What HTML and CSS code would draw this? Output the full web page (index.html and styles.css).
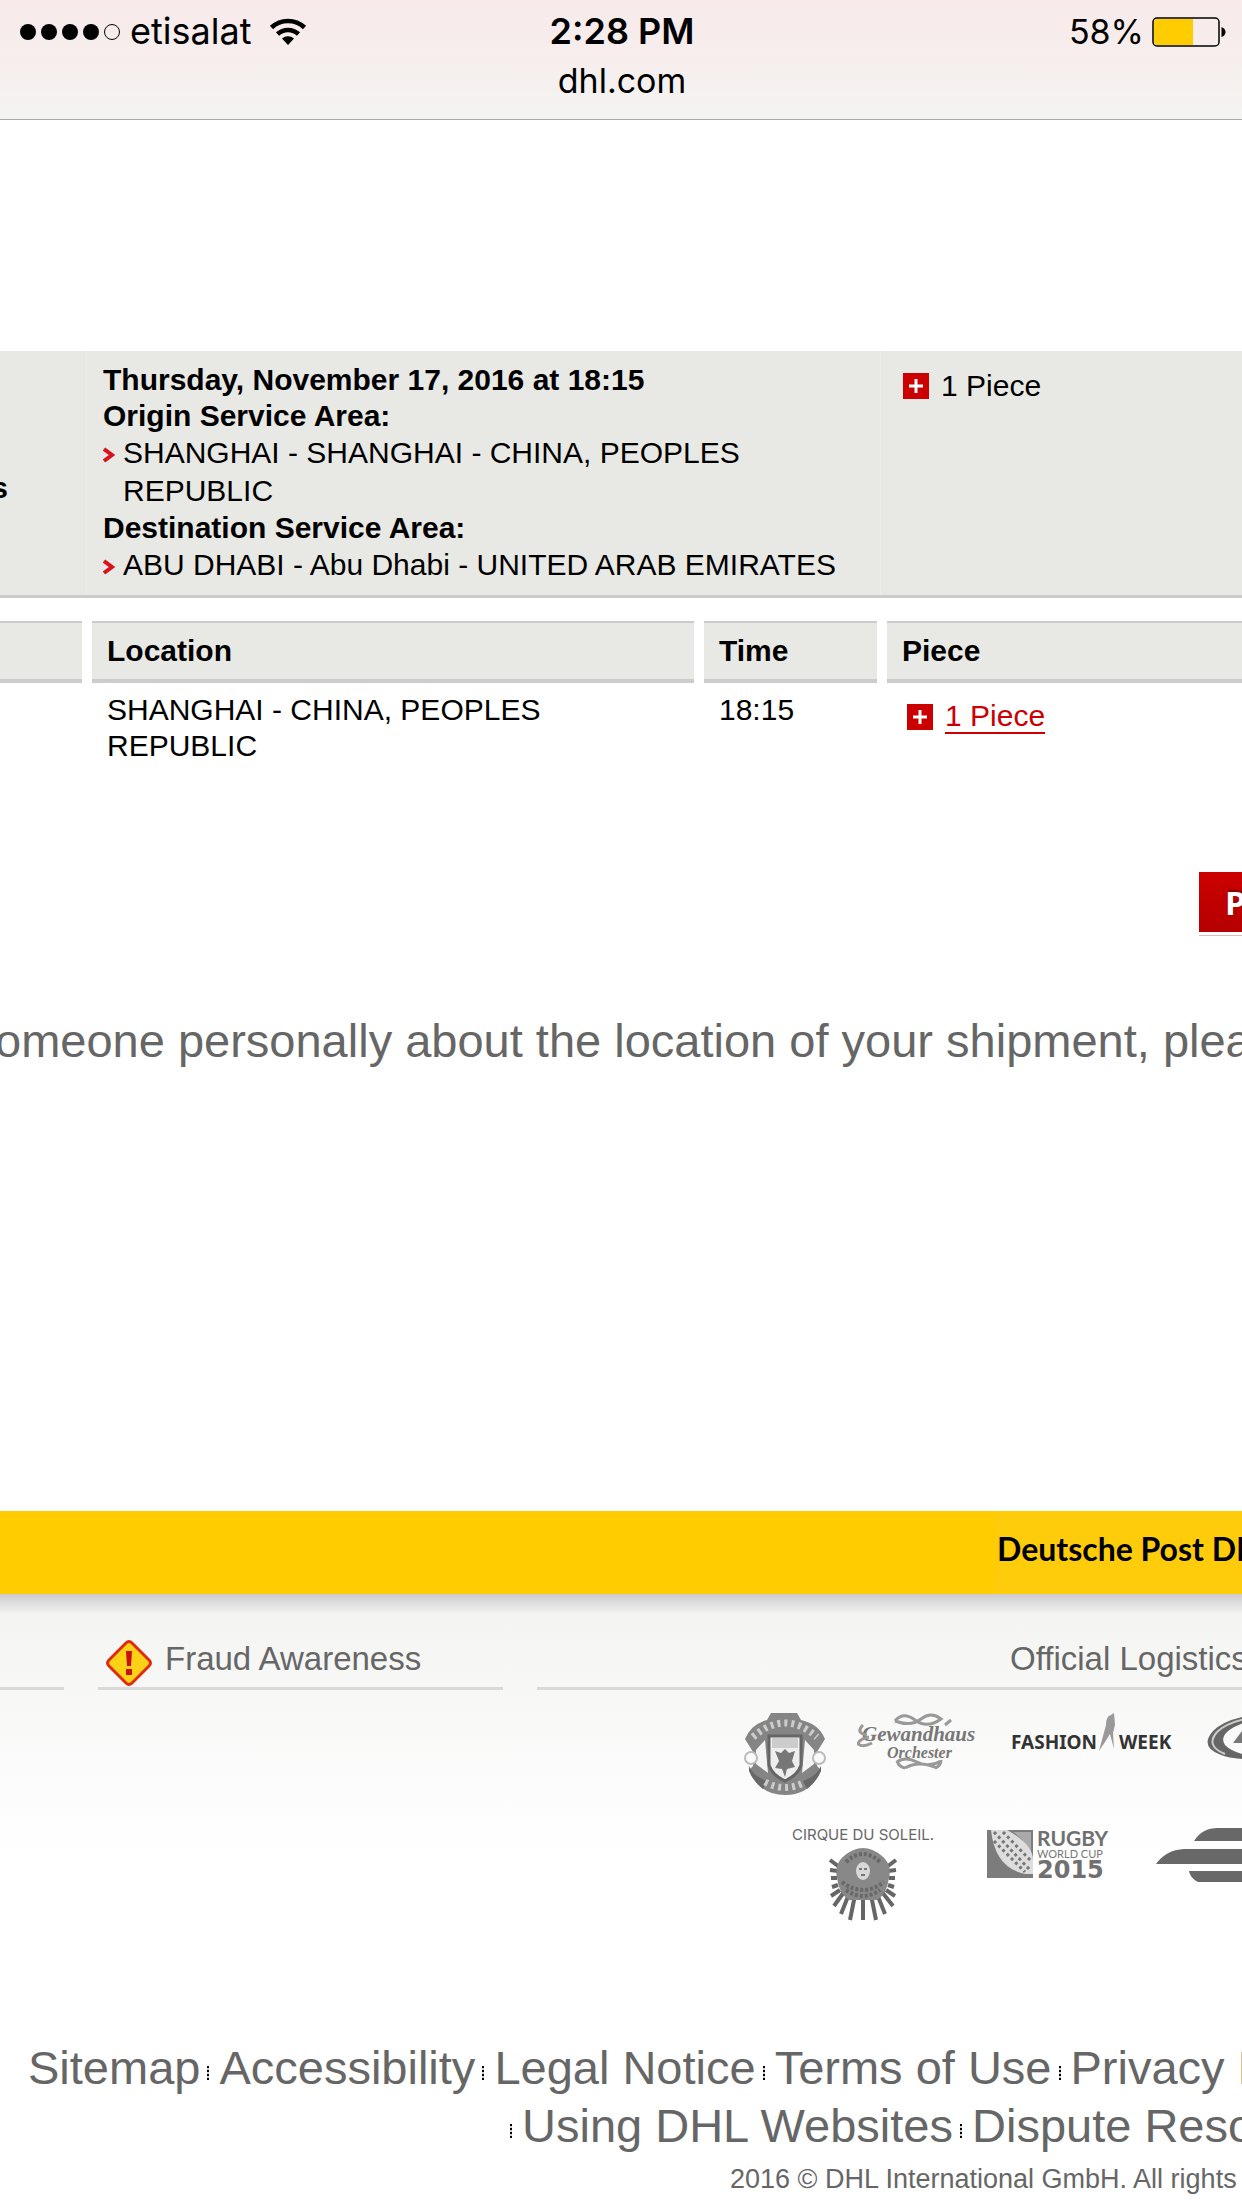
FILE: index.html
```
<!DOCTYPE html>
<html lang="en">
<head>
    <meta charset="UTF-8">
    <meta name="viewport" content="width=device-width, initial-scale=1.0">
    <title>DHL | Tracking</title>
    <link rel="stylesheet" href="styles.css">
</head>
<body>
    <header class="phone-bar">
        <div class="status">
            <div class="status-left">
                <svg class="signal" viewBox="0 0 102 18" width="102" height="18">
                    <circle cx="10" cy="9" r="8"/>
                    <circle cx="31" cy="9" r="8"/>
                    <circle cx="52" cy="9" r="8"/>
                    <circle cx="73" cy="9" r="8"/>
                    <circle cx="94" cy="9" r="7.5" fill="none" stroke="#000"/>
                </svg>
                <span>etisalat</span>
                <svg class="wifi" viewBox="0 0 38 28" width="38" height="28">
                    <path d="M2.5 9.5a24 24 0 0 1 33 0M8.5 16a15.500 15.500 0 0 1 21 0" fill="none" stroke="#000" stroke-width="4.500"/>
                    <path d="M19 27l-6-6.500a9 9 0 0 1 12 0z"/>
                </svg>
            </div>
            <div class="status-time">2:28 PM</div>
            <div class="status-right">
                <span>58%</span>
                <svg viewBox="0 0 74 30" width="74" height="30">
                    <rect x="1" y="1" width="66" height="28" rx="4" fill="none" stroke="#000" stroke-width="1.500"/>
                    <path d="M2 5a3 3 0 0 1 3-3h36v26H5a3 3 0 0 1-3-3z" fill="#fc0"/>
                    <path d="M69.500 10q4 1.500 4 5t-4 5z"/>
                </svg>
            </div>
        </div>
        <div class="site">dhl.com</div>
    </header>

    <main>
        <section class="summary">
            <div class="summary-status"><strong>s</strong></div>
            <div class="summary-route">
                <strong>Thursday, November 17, 2016 at 18:15</strong>
                <strong>Origin Service Area:</strong>
                <ul>
                    <li>
                        <svg viewBox="0 0 12 16" width="12" height="16"><path d="M1 2l8 6-8 6" fill="none" stroke="#d8141b" stroke-width="4"/></svg>
                        SHANGHAI - SHANGHAI - CHINA, PEOPLES REPUBLIC
                    </li>
                </ul>
                <strong>Destination Service Area:</strong>
                <ul>
                    <li>
                        <svg viewBox="0 0 12 16" width="12" height="16"><path d="M1 2l8 6-8 6" fill="none" stroke="#d8141b" stroke-width="4"/></svg>
                        ABU DHABI - Abu Dhabi - UNITED ARAB EMIRATES
                    </li>
                </ul>
            </div>
            <div class="summary-piece">
                <span class="piece">
                    <svg viewBox="0 0 26 26" width="26" height="26"><path fill="#c00" d="M0 0h26v26H0z"/><path d="M6 13h14M13 6v14" stroke="#fff" stroke-width="3"/></svg>
                    <span>1 Piece</span>
                </span>
            </div>
        </section>

        <table class="events">
            <colgroup>
                <col class="col-date">
                <col class="col-location">
                <col class="col-time">
                <col>
            </colgroup>
            <thead>
                <tr>
                    <th></th>
                    <th>Location</th>
                    <th>Time</th>
                    <th>Piece</th>
                </tr>
            </thead>
            <tbody>
                <tr>
                    <td></td>
                    <td>SHANGHAI - CHINA, PEOPLES REPUBLIC</td>
                    <td>18:15</td>
                    <td>
                        <a class="piece" href="#">
                            <svg viewBox="0 0 26 26" width="26" height="26"><path fill="#c00" d="M0 0h26v26H0z"/><path d="M6 13h14M13 6v14" stroke="#fff" stroke-width="3"/></svg>
                            <span>1 Piece</span>
                        </a>
                    </td>
                </tr>
            </tbody>
        </table>

        <div class="actions">
            <button class="btn" type="button">Print</button>
        </div>

        <p class="help">omeone personally about the location of your shipment, please</p>
    </main>

    <div class="brand-bar">
        <div class="brand">Deutsche Post DHL</div>
    </div>

    <footer>
        <div class="footer-columns">
            <div class="column"></div>
            <div class="column">
                <a class="fraud" href="#">
                    <svg viewBox="0 0 46 46" width="46" height="46">
                        <path d="M20 3q3-3 6 0l17 17q3 3 0 6L26 43q-3 3-6 0L3 26q-3-3 0-6z" fill="#fcd116" stroke="#dd2c10" stroke-width="3"/>
                        <path d="M20 11h6l-1 15h-4zM20 29h6v6h-6z" fill="#c81010"/>
                    </svg>
                    Fraud Awareness
                </a>
            </div>
            <div class="column column-partners">Official Logistics</div>
        </div>

        <div class="partners">
            <div class="partner-row">
                <svg viewBox="0 0 84 82" width="84" height="82">
                    <path d="M28 0h26l4 7q18 4 24 19l-8 13v14l4 4Q68 82 42 82T6 57l4-4V39L2 26Q8 11 24 7z" fill="#858585"/>
                    <path d="M22 27l-9 10v14l12 9zM62 27l9 10v14l-12 9z" fill="#f4f4f4"/>
                    <path d="M26 23h32v29q-3 10-16 16-13-6-16-16z" fill="#eee" stroke="#666" stroke-width="3"/>
                    <path d="M29 25h26v10H29z" fill="#ccc"/>
                    <path d="M32 38l6 2 4-4 4 4 6-2-3 10 3 6-8 2-2 8-3-8-7-1 4-7z" fill="#777"/>
                    <path d="M6 53q4 10 18 15l-4 8Q10 68 6 58zM78 53q-4 10-18 15l4 8q10-8 14-18z" fill="#686868"/>
                    <g fill="#fafafa" stroke="#bbb" stroke-width="2"><circle cx="8" cy="45" r="6"/><circle cx="76" cy="45" r="6"/></g>
                    <path d="M10 24q32-28 64 0M22 69q20 11 40 0" fill="none" stroke="#ccc" stroke-width="7" stroke-dasharray="3 4"/>
                </svg>
                <svg class="gewandhaus" viewBox="0 0 124 57" width="124" height="57">
                    <text class="logo-gewandhaus" x="5" y="28">Gewandhaus</text>
                    <text class="logo-orchester" x="30" y="45">Orchester</text>
                    <path d="M38 8Q46-2 58 7T84 6q-10-8-20 0T38 8M40 49q8-6 20 0t24-1M48 55q14-8 32 0M40 48q2 6 8 7M84 47q0 6-6 8M88 12l6-5M6 12Q-2 20 10 22M12 24Q2 26 1 31q4 4 14-1" fill="none" stroke="#999" stroke-width="3"/>
                </svg>
                <svg viewBox="0 0 164 40" width="164" height="40">
                    <text class="logo-fashion" x="0" y="36">FASHION</text>
                    <text class="logo-fashion" x="108" y="36">WEEK</text>
                    <path d="M95 12q0-9 5-10l3-2 1 12-2 8 1 16-4-15-5 8-6 9z" fill="#999"/>
                </svg>
                <svg viewBox="0 0 90 48" width="90" height="48">
                    <path d="M70 0Q24 2 8 18q-14 16 8 24 14 6 60 4V44Q34 46 20 32 12 20 38 10 52 4 90 4V0z" fill="#666"/>
                    <path d="M70 3Q28 4 12 19q-12 14 8 22" fill="none" stroke="#ccc" stroke-width="2"/>
                    <path d="M28 30l12-16h6l-6 16z" fill="#777"/>
                </svg>
            </div>
            <div class="partner-row partner-row-second">
                <svg viewBox="0 0 150 94" width="150" height="94">
                    <text class="logo-cirque" x="0" y="12">CIRQUE DU SOLEIL.</text>
                    <path d="M46 38l-8-6M46 43l-8-1M45 50l-6 0M46 57l-6 2M48 62l-9 6M52 64L42 78M57 66L49 86M63 67l-5 25M71 67v25M79 67l5 25M85 66l8 20M90 64l11 14M94 62l9 6M96 57l6 2M97 50l6 0M96 43l8-1M96 38l8-6" stroke="#666" stroke-width="4"/>
                    <path d="M52 28q19-16 38 0 10 8 7 22-2 16-12 22H57q-10-6-12-22-3-14 7-22z" fill="#888"/>
                    <path d="M54 34q17-16 34 0M50 54q21 16 42 0M54 62q17 12 34 0" fill="none" stroke="#686868" stroke-width="4" stroke-dasharray="3 2"/>
                    <ellipse cx="71" cy="43" rx="7" ry="9" fill="#d8d8d8"/>
                    <path d="M67 41h3M72 41h3M69 47h4" stroke="#777" stroke-width="2"/>
                </svg>
                <svg class="rugby" viewBox="0 0 124 50" width="124" height="50">
                    <path d="M0 2h46v48H0z" fill="#7c7c7c"/>
                    <path d="M26 4h18v22Q38 12 26 4z" fill="#aaa"/>
                    <path d="M4 2h16q26 14 26 30v14h-8Q8 40 4 2z" fill="#ddd"/>
                    <path d="M7 4l36 38M16 4l28 29M7 13l31 31" stroke="#777" stroke-width="3" stroke-dasharray="3 3"/>
                    <text class="logo-rugby" x="50" y="18">RUGBY</text>
                    <text class="logo-cup" x="50" y="30">WORLD CUP</text>
                    <text class="logo-year" x="50" y="50">2015</text>
                </svg>
                <svg class="stripes" viewBox="0 0 120 54" width="120" height="54" fill="#686868">
                    <path d="M38 13Q46 0 62 0h58v13zM0 36q10-14 28-15h92v15zM33 43h87v11H42q-8-4-9-11z"/>
                </svg>
            </div>
        </div>

        <nav class="legal">
            <div class="legal-row">
                <a href="#">Sitemap</a><i></i><a href="#">Accessibility</a><i></i><a href="#">Legal Notice</a><i></i><a href="#">Terms of Use</a><i></i><a href="#">Privacy Policy</a>
            </div>
            <div class="legal-row legal-row-second">
                <i></i><a href="#">Using DHL Websites</a><i></i><a href="#">Dispute Resolution</a>
            </div>
        </nav>
        <p class="copyright">2016 © DHL International GmbH. All rights reserved.</p>
    </footer>
</body>
</html>
```

FILE: styles.css
```
* {
    margin: 0;
    padding: 0;
    box-sizing: border-box;
}

body {
    background-color: #fff;
    color: #000;
    font-family: 'Liberation Sans', Arial, sans-serif;
    font-size: 30px;
    line-height: 36px;
    overflow-x: hidden;
}

a {
    color: #666;
    text-decoration: none;
}

svg {
    display: block;
    flex-shrink: 0;
}

/* phone status bar */
.phone-bar {
    height: 120px;
    padding: 7px 16px 0 18px;
    border-bottom: 1px solid #aaa;
    background: linear-gradient(#f8eaea, #f6eeed 50%, #f4f4f2);
    font-family: Inter, sans-serif;
    font-size: 36px;
    line-height: 49px;
}

.status {
    display: grid;
    grid-template-columns: 1fr auto 1fr;
}

.status-left,
.status-right {
    display: flex;
    align-items: center;
}

.status-left span {
    margin: 0 18px 0 10px;
}

.status-right {
    justify-content: flex-end;
    gap: 8px;
    font-size: 34px;
}

.status-time {
    font-weight: 600;
}

.site {
    font-size: 34px;
    text-align: center;
}

/* shipment summary */
.summary {
    display: grid;
    grid-template-columns: 87px 794px 1fr;
    margin-top: 231px;
    background-color: #e8e9e4;
    border-bottom: 3px solid #ccc;
}

.summary-status {
    display: flex;
    justify-content: flex-end;
    padding: 119px 78px 0 0;
    border-right: 1px solid #ecede9;
}

.summary-route {
    padding: 11px 16px 11px;
    border-right: 1px solid #ecede9;
}

.summary-route strong {
    display: block;
}

.summary-route ul {
    list-style: none;
}

.summary-route li {
    display: flex;
    gap: 8px;
    padding-right: 24px;
    line-height: 38px;
}

.summary-route li svg {
    margin-top: 13px;
}

.summary-piece {
    padding: 17px 22px;
}

.piece {
    display: flex;
    align-items: center;
    gap: 12px;
}

/* events table */
.events {
    width: calc(100% + 20px);
    margin: 23px -10px 0;
    table-layout: fixed;
    border-spacing: 10px 0;
    text-align: left;
}

.col-date {
    width: 82px;
}

.col-location {
    width: 602px;
}

.col-time {
    width: 173px;
}

.events th {
    height: 62px;
    padding: 0 15px;
    background-color: #e8e9e4;
    border-top: 2px solid #ccc;
    border-bottom: 4px solid #ccc;
}

.events td {
    padding: 9px 120px 0 15px;
    vertical-align: top;
}

.events td:nth-child(3) {
    padding-right: 0;
}

.events td:last-child {
    padding: 17px 20px 0;
}

a.piece {
    color: #c00;
}

a.piece span {
    border-bottom: 2px solid #c00;
    line-height: 32px;
}

.actions {
    display: flex;
    justify-content: flex-end;
    margin-top: 108px;
    overflow: hidden;
}

.btn {
    width: 170px;
    height: 60px;
    margin: 0 -127px 5px 0;
    padding-left: 26px;
    border: none;
    background: linear-gradient(#c00, #b50000);
    box-shadow: 0 3px #fff, 0 4px #e8b4b4;
    color: #fff;
    font-family: 'Open Sans', sans-serif;
    font-size: 33px;
    font-weight: bold;
    text-align: left;
    text-shadow: 1px -2px 2px #800;
}

.help {
    margin: 77px 0 443px;
    color: #666;
    font-size: 47px;
    line-height: 54px;
    text-indent: -5px;
    white-space: nowrap;
    overflow: hidden;
}

/* yellow bar */
.brand-bar {
    display: flex;
    justify-content: flex-end;
    height: 83px;
    background-color: #fc0;
}

.brand {
    width: 247px;
    padding-left: 2px;
    background-color: #ffcc0c;
    font-family: Lato, sans-serif;
    font-size: 32px;
    font-weight: bold;
    line-height: 76px;
    white-space: nowrap;
    overflow: hidden;
}

/* footer */
footer {
    padding-top: 33px;
    background: linear-gradient(#ccc, rgba(240, 240, 240, 0) 20px), linear-gradient(#f3f3f2, #fff 260px);
    color: #666;
    overflow: hidden;
}

.footer-columns {
    display: grid;
    grid-template-columns: 64px 405px 1fr;
    column-gap: 34px;
    font-size: 33px;
}

.column {
    height: 63px;
    padding: 13px 8px 0;
    border-bottom: 3px solid #d9d9d9;
    line-height: 38px;
}

.column-partners {
    padding-left: 473px;
    white-space: nowrap;
}

.fraud {
    display: flex;
    align-items: flex-start;
    gap: 13px;
}

.partners {
    height: 301px;
    padding: 23px 0 0 743px;
}

.partner-row {
    display: flex;
    gap: 30px;
}

.partner-row-second {
    gap: 45px;
    margin: 33px 0 0 49px;
}

.logo-gewandhaus {
    font: italic bold 21px 'Liberation Serif', serif;
    fill: #777;
}

.logo-orchester {
    font: italic bold 16px 'Liberation Serif', serif;
    fill: #777;
}

.logo-fashion {
    font: bold 19px 'Noto Sans', sans-serif;
    fill: #333;
}

.logo-cirque {
    font: 15px Inter, sans-serif;
    fill: #666;
}

.logo-rugby {
    font: bold 21px Lato, sans-serif;
    fill: #707070;
}

.logo-cup {
    font: 11px Lato, sans-serif;
    fill: #777;
}

.logo-year {
    font: bold 24px 'DejaVu Sans', sans-serif;
    fill: #707070;
}

.legal {
    padding: 48px 0 0 28px;
    font-size: 47px;
    line-height: 58px;
}

.legal-row {
    display: flex;
    align-items: center;
    white-space: nowrap;
    overflow: hidden;
}

.legal-row-second {
    margin-left: 475px;
}

.legal i {
    flex-shrink: 0;
    width: 2px;
    height: 14px;
    margin: 10px 10px 0 7px;
    background: repeating-linear-gradient(#000 0 2px, #ccc 2px 4px);
}

.copyright {
    margin-left: 730px;
    font-size: 27px;
    line-height: 48px;
    white-space: nowrap;
    overflow: hidden;
}
```
